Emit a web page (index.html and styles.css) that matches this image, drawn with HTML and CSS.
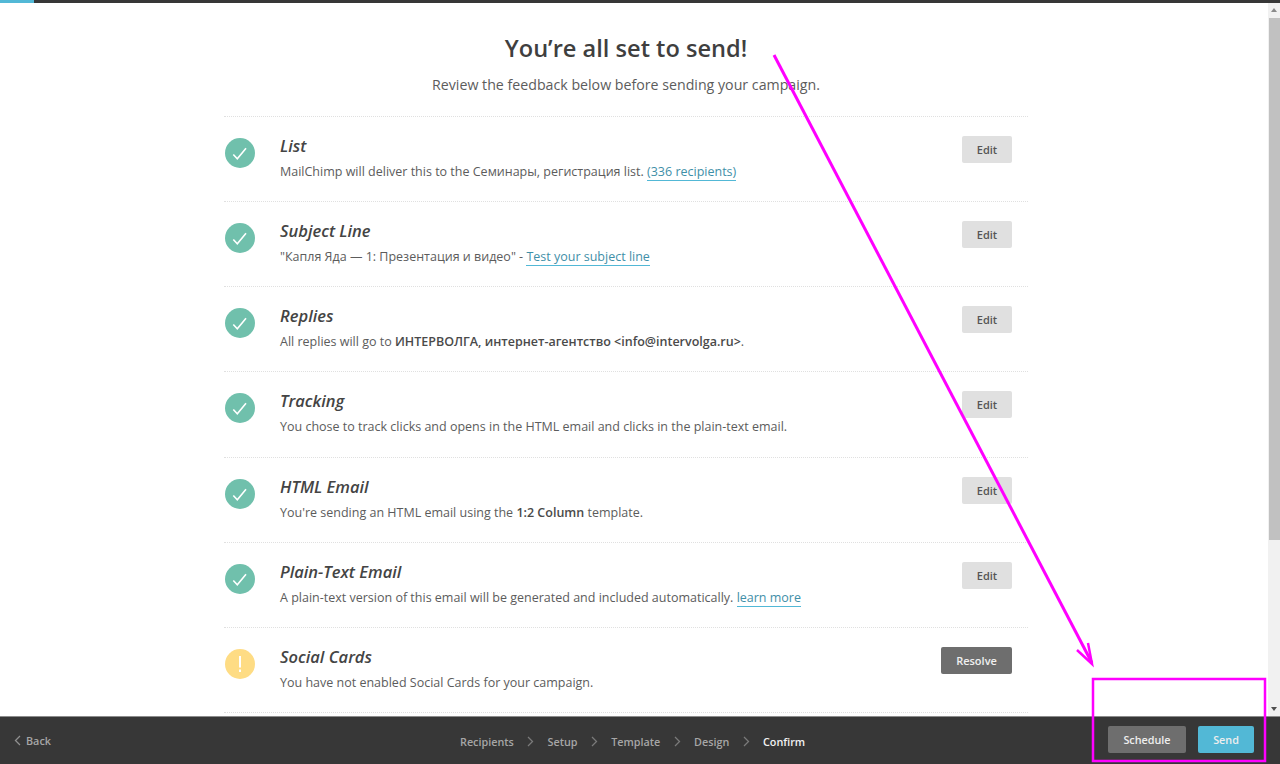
FILE: index.html
```html
<!DOCTYPE html>
<html lang="en">
<head>
<meta charset="utf-8">
<title>Confirm</title>
<link rel="stylesheet" href="styles.css">
</head>
<body>
<div class="progress"><div class="progress-fill"></div></div>
<div class="middle">
  <main class="content">
    <div class="column">
      <h1 class="title">You’re all set to send!</h1>
      <p class="lead">Review the feedback below before sending your campaign.</p>
      <ul class="checklist">
        <li class="row">
          <svg class="badge" viewBox="0 0 30 30"><circle cx="15" cy="15" r="15" fill="#70c0ac"/><path d="M8.3 16.5l4 4.2 8.7-10.4" fill="none" stroke="#fff" stroke-width="1.6"/></svg>
          <div class="body"><h2 class="name">List</h2><p class="desc">MailChimp will deliver this to the Семинары, регистрация list. <a class="link">(336 recipients)</a></p></div>
          <a class="btn">Edit</a>
        </li>
        <li class="row">
          <svg class="badge" viewBox="0 0 30 30"><circle cx="15" cy="15" r="15" fill="#70c0ac"/><path d="M8.3 16.5l4 4.2 8.7-10.4" fill="none" stroke="#fff" stroke-width="1.6"/></svg>
          <div class="body"><h2 class="name">Subject Line</h2><p class="desc">"Капля Яда — 1: Презентация и видео" - <a class="link">Test your subject line</a></p></div>
          <a class="btn">Edit</a>
        </li>
        <li class="row">
          <svg class="badge" viewBox="0 0 30 30"><circle cx="15" cy="15" r="15" fill="#70c0ac"/><path d="M8.3 16.5l4 4.2 8.7-10.4" fill="none" stroke="#fff" stroke-width="1.6"/></svg>
          <div class="body"><h2 class="name">Replies</h2><p class="desc">All replies will go to <b>ИНТЕРВОЛГА, интернет-агентство &lt;info@intervolga.ru&gt;</b>.</p></div>
          <a class="btn">Edit</a>
        </li>
        <li class="row">
          <svg class="badge" viewBox="0 0 30 30"><circle cx="15" cy="15" r="15" fill="#70c0ac"/><path d="M8.3 16.5l4 4.2 8.7-10.4" fill="none" stroke="#fff" stroke-width="1.6"/></svg>
          <div class="body"><h2 class="name">Tracking</h2><p class="desc">You chose to track clicks and opens in the HTML email and clicks in the plain-text email.</p></div>
          <a class="btn">Edit</a>
        </li>
        <li class="row">
          <svg class="badge" viewBox="0 0 30 30"><circle cx="15" cy="15" r="15" fill="#70c0ac"/><path d="M8.3 16.5l4 4.2 8.7-10.4" fill="none" stroke="#fff" stroke-width="1.6"/></svg>
          <div class="body"><h2 class="name">HTML Email</h2><p class="desc">You're sending an HTML email using the <b>1:2 Column</b> template.</p></div>
          <a class="btn">Edit</a>
        </li>
        <li class="row">
          <svg class="badge" viewBox="0 0 30 30"><circle cx="15" cy="15" r="15" fill="#70c0ac"/><path d="M8.3 16.5l4 4.2 8.7-10.4" fill="none" stroke="#fff" stroke-width="1.6"/></svg>
          <div class="body"><h2 class="name">Plain-Text Email</h2><p class="desc">A plain-text version of this email will be generated and included automatically. <a class="link">learn more</a></p></div>
          <a class="btn">Edit</a>
        </li>
        <li class="row">
          <svg class="badge" viewBox="0 0 30 30"><circle cx="15" cy="15" r="15" fill="#fedc84"/><path d="M14 7h2v11.5h-2zM14 20.5h2v2.5h-2z" fill="#fff"/></svg>
          <div class="body"><h2 class="name">Social Cards</h2><p class="desc">You have not enabled Social Cards for your campaign.</p></div>
          <a class="btn btn-dark">Resolve</a>
        </li>
      </ul>
    </div>
  </main>
  <div class="scrollbar">
    <svg class="arrow" viewBox="0 0 12 15"><path d="M3 9l3-4 3 4z" fill="#8a8a8a"/></svg>
    <div class="thumb"></div>
    <div class="track"></div>
    <svg class="arrow" viewBox="0 0 12 15"><path d="M3 6l3 4 3-4z" fill="#505050"/></svg>
  </div>
</div>
<footer class="footer">
  <a class="back"><svg class="back-icon" viewBox="0 0 7 11"><path d="M6 1L1.5 5.5 6 10" fill="none" stroke="#8f8f8f" stroke-width="1.3"/></svg>Back</a>
  <nav class="steps">
    <span class="step">Recipients</span><svg class="sep" viewBox="0 0 7 11"><path d="M1 1l4.5 4.5L1 10" fill="none" stroke="#7a7a7a" stroke-width="1.3"/></svg>
    <span class="step">Setup</span><svg class="sep" viewBox="0 0 7 11"><path d="M1 1l4.5 4.5L1 10" fill="none" stroke="#7a7a7a" stroke-width="1.3"/></svg>
    <span class="step">Template</span><svg class="sep" viewBox="0 0 7 11"><path d="M1 1l4.5 4.5L1 10" fill="none" stroke="#7a7a7a" stroke-width="1.3"/></svg>
    <span class="step">Design</span><svg class="sep" viewBox="0 0 7 11"><path d="M1 1l4.5 4.5L1 10" fill="none" stroke="#7a7a7a" stroke-width="1.3"/></svg>
    <span class="step step-current">Confirm</span>
  </nav>
  <div class="actions">
    <a class="fbtn fbtn-grey">Schedule</a>
    <a class="fbtn fbtn-blue">Send</a>
  </div>
</footer>
<svg class="annotation" viewBox="0 0 1280 764" width="1280" height="764">
  <path d="M774 55L1092 663" fill="none" stroke="#ff00ff" stroke-width="3"/>
  <path d="M1077 650L1092 664 1088 643" fill="none" stroke="#ff00ff" stroke-width="2.5"/>
  <rect x="1093" y="679" width="172" height="82" fill="none" stroke="#ff00ff" stroke-width="2.5"/>
</svg>
</body>
</html>
```
FILE: styles.css
```css
* { box-sizing: border-box; }
html, body { margin: 0; height: 100%; overflow: hidden; }
body {
  display: flex;
  flex-direction: column;
  height: 764px;
  font-family: "Open Sans", "Noto Sans", sans-serif;
  color: #555;
  background: #fff;
  position: relative;
}
.progress { height: 3px; background: #373737; flex: none; }
.progress-fill { width: 34px; height: 3px; background: #52b8d6; }
.middle { flex: 1; display: flex; min-height: 0; }
.content { flex: 1; overflow: hidden; min-width: 0; }
.column { width: 804px; margin-left: 224px; }
.title {
  margin: 29px 0 0;
  font-size: 23.6px;
  line-height: 33px;
  font-weight: 600;
  color: #3f3f3f;
  text-align: center;
}
.lead {
  margin: 8px 0 0;
  font-size: 14.2px;
  line-height: 24px;
  color: #5c5c5c;
  text-align: center;
}
.checklist { list-style: none; margin: 19px 0 0; padding: 0; border-top: 1px dotted #e0e0e0; }
.row {
  display: flex;
  align-items: flex-start;
  height: 85.15px;
  padding: 19px 16px 0 1px;
  border-bottom: 1px dotted #e0e0e0;
}
.badge { width: 30px; height: 30px; flex: none; margin-top: 2px; }
.body { flex: 1; margin: -1px 0 0 25px; min-width: 0; }
.name {
  margin: 0;
  font-size: 16.5px;
  line-height: 22px;
  font-weight: 600;
  font-style: italic;
  color: #444;
}
.desc { margin: 6px 0 0; font-size: 12.5px; line-height: 18px; color: #5c5c5c; }
.desc b { font-weight: 600; color: #4a4a4a; }
.link { color: #3f8fa8; border-bottom: 1px solid #52b8d6; }
.btn {
  flex: none;
  height: 27px;
  width: 50px;
  background: #e0e0e0;
  border-radius: 2px;
  font-size: 11px;
  font-weight: 600;
  line-height: 27px;
  text-align: center;
  color: #555;
}
.btn-dark { width: 71px; background: #6e6e6e; color: #f0f0f0; }
.scrollbar { flex: none; width: 12px; display: flex; flex-direction: column; background: #f1f1f1; }
.arrow { width: 12px; height: 15px; flex: none; display: block; }
.thumb { height: 522px; flex: none; margin-left: 1px; background: #c1c1c1; }
.track { flex: 1; }
.footer {
  flex: none;
  height: 48px;
  background: #373737;
  border-top: 1px solid #8c8c8c;
  position: relative;
  display: flex;
  align-items: center;
  justify-content: space-between;
  font-size: 10.8px;
  font-weight: 600;
  color: #a6a6a6;
}
.back { display: flex; align-items: center; gap: 5px; margin-left: 14px; }
.back-icon { width: 7px; height: 11px; }
.steps {
  position: absolute;
  left: 460px;
  top: 0;
  height: 49px;
  display: flex;
  align-items: center;
  gap: 13.35px;
}
.sep { width: 7px; height: 11px; flex: none; }
.step-current { color: #f2f2f2; }
.actions { display: flex; gap: 12px; margin: 0 26px 2px 0; }
.fbtn { height: 27px; line-height: 27px; border-radius: 2px; text-align: center; color: #eee; }
.fbtn-grey { width: 78px; background: #6e6e6e; }
.fbtn-blue { width: 56px; background: #52b8d6; }
.annotation { position: absolute; left: 0; top: 0; pointer-events: none; }
```
